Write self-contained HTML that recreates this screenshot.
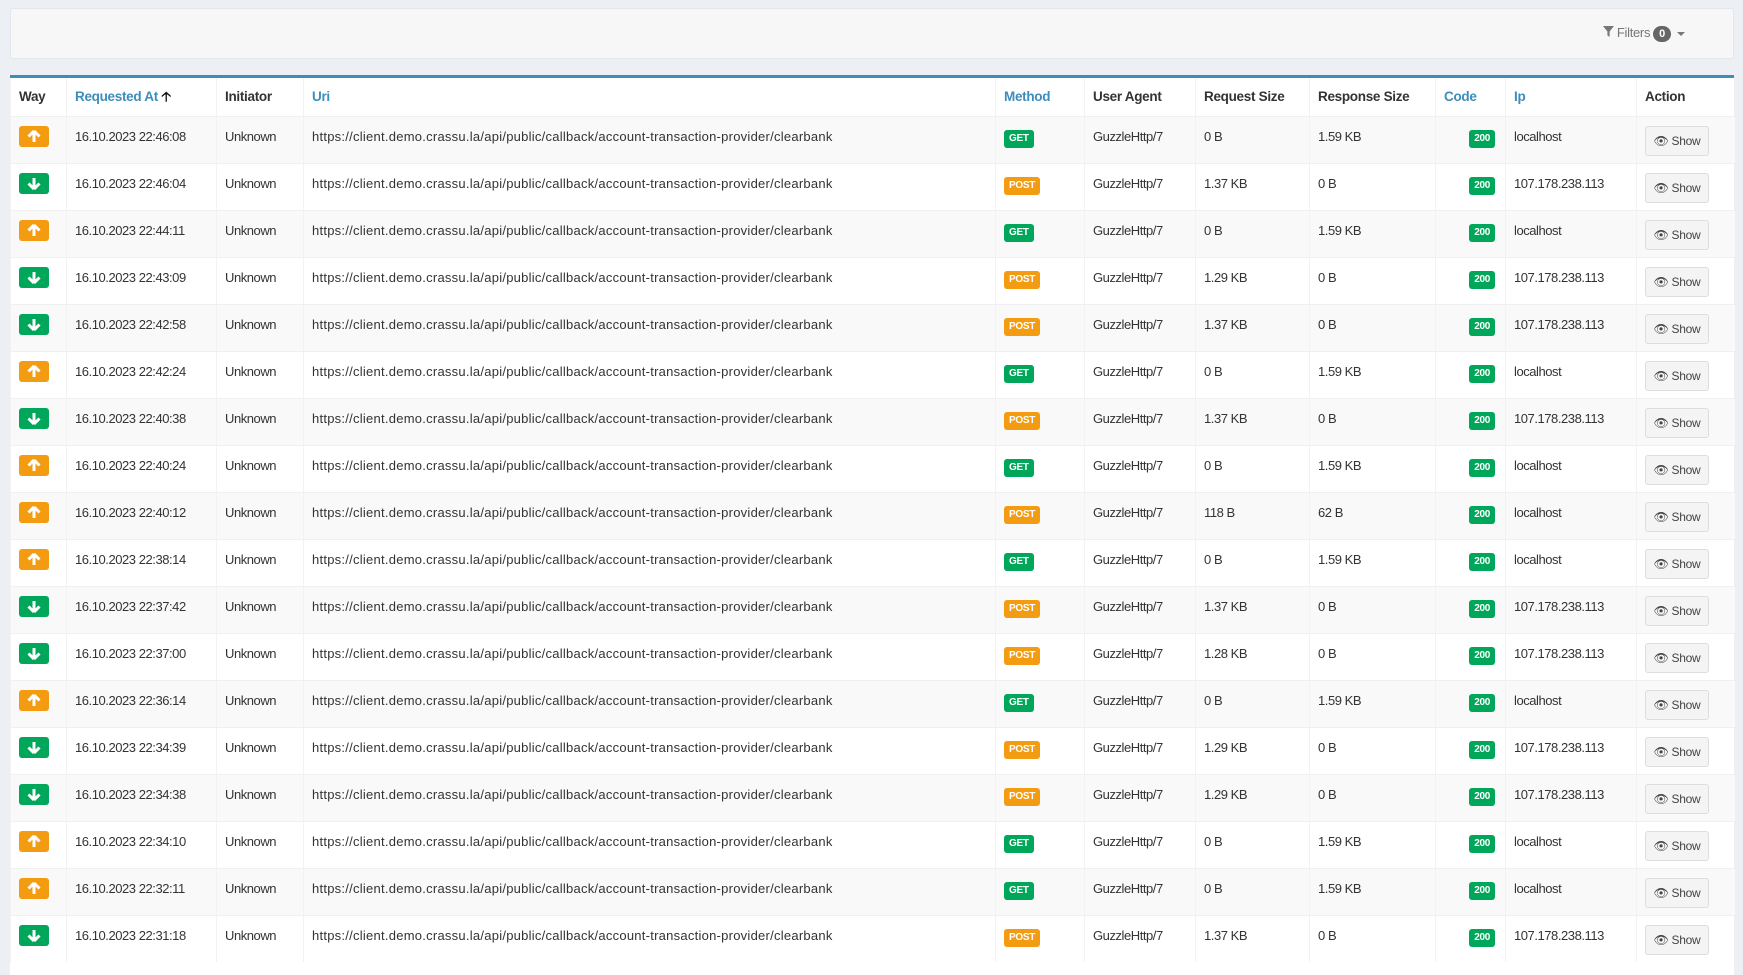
<!DOCTYPE html>
<html><head><meta charset="utf-8"><style>
*{box-sizing:border-box;margin:0;padding:0}
body{width:1743px;height:966px;overflow:hidden;background:#ecf0f5;font-family:"Liberation Sans",sans-serif;color:#333}
.top{position:absolute;left:10px;top:8px;width:1724px;height:51px;background:#f7f7f7;border:1px solid #e3e6ea;border-radius:3px}
.filt{position:absolute;right:48px;top:16px;font-size:13px;color:#777;letter-spacing:-0.3px}
.filt .b{display:inline-block;background:#666;color:#fff;border-radius:10px;padding:2px 6px;font-size:11px;font-weight:bold;margin-left:3px}
.car{display:inline-block;width:0;height:0;border-left:4px solid transparent;border-right:4px solid transparent;border-top:4px solid #777;margin-left:6px;vertical-align:middle}
.box{position:absolute;left:10px;top:75px;width:1724px;height:900px;background:#fff;border-top:3px solid #3c8dbc}
table{border-collapse:collapse;table-layout:fixed;width:1724px}
td,th{height:47px;vertical-align:top;padding:10px 8px 0 8px;border-left:1px solid #f2f2f2;font-size:13px;line-height:20px;letter-spacing:-0.45px;white-space:nowrap;overflow:hidden;text-align:left}
td.u{letter-spacing:0.25px}
th{height:38px;font-size:13.5px;font-weight:bold;padding-top:9px;letter-spacing:-0.3px;color:#333}
th.l{color:#3c8dbc}
tbody tr:nth-child(odd){background:#f9f9f9}
tbody tr td{border-top:1px solid #f0f0f0}
.w{display:inline-block;width:30px;height:21px;border-radius:3px;margin-top:-1px;position:relative}
.up{background:#f39c12}.dn{background:#00a65a}
.w svg{position:absolute;left:8px;top:4px}
.bg{display:inline-block;color:#fff;font-weight:bold;font-size:10px;padding:1px 5px;border-radius:3px;line-height:16px;letter-spacing:-0.3px;margin-top:2px}
.g{background:#00a65a}.o{background:#f39c12}
td.c{text-align:right;padding-right:10px}
.btn{display:inline-block;background:#f4f4f4;border:1px solid #ddd;border-radius:3px;width:64px;height:30px;font-size:12px;line-height:28px;text-align:center;color:#444;margin-top:-1px;margin-left:0px;letter-spacing:-0.3px}
</style></head><body>
<div class="top"><div class="filt"><svg width="11" height="11" viewBox="0 0 10 10"><path d="M0 0h10L6 5v5L4 8.5V5z" fill="#777"/></svg> Filters<span class="b">0</span><span class="car"></span></div></div>
<div class="box"><table>
<colgroup><col style="width:56px"><col style="width:150px"><col style="width:87px"><col style="width:692px"><col style="width:89px"><col style="width:111px"><col style="width:114px"><col style="width:126px"><col style="width:70px"><col style="width:131px"><col style="width:98px"></colgroup>
<thead><tr><th>Way</th><th class="l">Requested At <span style="color:#111">&#129121;</span></th><th>Initiator</th><th class="l">Uri</th><th class="l">Method</th><th>User Agent</th><th>Request Size</th><th>Response Size</th><th class="l">Code</th><th class="l">Ip</th><th>Action</th></tr></thead>
<tbody id="tb"></tbody></table></div>
<script>
var d=[["u","22:46:08","G","0 B","1.59 KB","localhost"],["d","22:46:04","P","1.37 KB","0 B","107.178.238.113"],["u","22:44:11","G","0 B","1.59 KB","localhost"],["d","22:43:09","P","1.29 KB","0 B","107.178.238.113"],["d","22:42:58","P","1.37 KB","0 B","107.178.238.113"],["u","22:42:24","G","0 B","1.59 KB","localhost"],["d","22:40:38","P","1.37 KB","0 B","107.178.238.113"],["u","22:40:24","G","0 B","1.59 KB","localhost"],["u","22:40:12","P","118 B","62 B","localhost"],["u","22:38:14","G","0 B","1.59 KB","localhost"],["d","22:37:42","P","1.37 KB","0 B","107.178.238.113"],["d","22:37:00","P","1.28 KB","0 B","107.178.238.113"],["u","22:36:14","G","0 B","1.59 KB","localhost"],["d","22:34:39","P","1.29 KB","0 B","107.178.238.113"],["d","22:34:38","P","1.29 KB","0 B","107.178.238.113"],["u","22:34:10","G","0 B","1.59 KB","localhost"],["u","22:32:11","G","0 B","1.59 KB","localhost"],["d","22:31:18","P","1.37 KB","0 B","107.178.238.113"]];
var h="";d.forEach(function(r){
var ic=r[0]=="u"?'<span class="w up"><svg width="14" height="13" viewBox="0 0 14 13"><path d="M7 1L1.5 6.5M7 1l5.5 5.5M7 1.5V12" stroke="#fff" stroke-width="3" fill="none"/></svg></span>':'<span class="w dn"><svg width="14" height="13" viewBox="0 0 14 13"><path d="M7 12L1.5 6.5M7 12l5.5-5.5M7 11.5V1" stroke="#fff" stroke-width="3" fill="none"/></svg></span>';
h+='<tr><td>'+ic+'</td><td>16.10.2023 '+r[1]+'</td><td>Unknown</td><td class="u">https://client.demo.crassu.la/api/public/callback/account-transaction-provider/clearbank</td><td>'+(r[2]=="G"?'<span class="bg g">GET</span>':'<span class="bg o">POST</span>')+'</td><td>GuzzleHttp/7</td><td>'+r[3]+'</td><td>'+r[4]+'</td><td class="c"><span class="bg g">200</span></td><td>'+r[5]+'</td><td><span class="btn">&#128065; Show</span></td></tr>';});
document.getElementById("tb").innerHTML=h;
</script>
</body></html>
